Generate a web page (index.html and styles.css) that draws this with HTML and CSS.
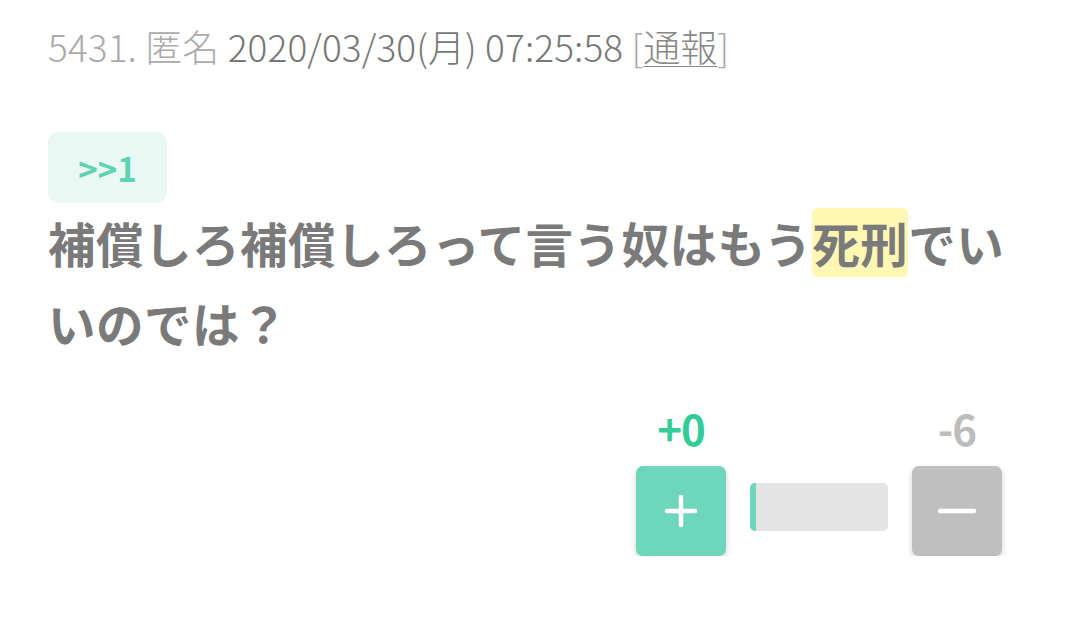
FILE: index.html
```html
<!DOCTYPE html>
<html lang="ja">
<head>
<meta charset="utf-8">
<link rel="stylesheet" href="styles.css">
</head>
<body>
<div class="post">
  <div class="meta">
    <span class="num">5431.</span>
    <span class="name">匿名</span>
    <span class="date">2020/03/30(月) 07:25:58</span>
    <span class="report">[<a class="report-link">通報</a>]</span>
  </div>
  <div class="anchor">&gt;&gt;1</div>
  <p class="body">補償しろ補償しろって言う奴はもう<span class="hl">死刑</span>でいいのでは？</p>
  <div class="votes">
    <div class="vote-col">
      <div class="count plus">+0</div>
      <button class="btn btn-plus" aria-label="plus">
        <svg width="40" height="40" viewBox="0 0 40 40"><path d="M20 6v28M6 20h28" stroke="#fff" stroke-width="4.5" stroke-linecap="round"/></svg>
      </button>
    </div>
    <div class="bar"><div class="bar-fill" style="width:6px"></div></div>
    <div class="vote-col">
      <div class="count minus">-6</div>
      <button class="btn btn-minus" aria-label="minus">
        <svg width="40" height="40" viewBox="0 0 40 40"><path d="M3 20h34" stroke="#fff" stroke-width="4.5" stroke-linecap="round"/></svg>
      </button>
    </div>
  </div>
</div>
</body>
</html>
```
FILE: styles.css
```css
html, body {
  margin: 0;
  padding: 0;
  background: #fff;
}
body {
  font-family: "Noto Sans CJK JP", "Noto Sans", sans-serif;
}
.post {
  padding: 22px 78px 0 48px;
}
.meta {
  font-size: 37px;
  line-height: 48px;
  font-weight: 300;
  color: #aaa;
  white-space: nowrap;
  letter-spacing: 0.1px;
}
.meta .date {
  color: #777;
}
.meta .report {
  color: #aaa;
}
.report-link {
  color: #888;
  text-decoration: underline;
  text-decoration-thickness: 1px;
  text-underline-offset: 4px;
}
.anchor {
  margin-top: 62px;
  width: 119px;
  height: 71px;
  box-sizing: border-box;
  background: #eaf8f4;
  border-radius: 11px;
  color: #5ed3b2;
  font-weight: 700;
  font-size: 33px;
  display: flex;
  align-items: center;
  justify-content: center;
}
.body {
  margin: 0 -40px 0 0;
  font-size: 47.5px;
  line-height: 80px;
  font-weight: 700;
  color: #7a7a7a;
  letter-spacing: 0.5px;
}
.hl {
  background: #fff7b3;
  border-radius: 5px;
  padding: 0;
}
.votes {
  margin-top: 41px;
  display: flex;
  justify-content: flex-end;
  align-items: flex-end;
  gap: 24px;
}
.vote-col {
  display: flex;
  flex-direction: column;
  align-items: center;
}
.count {
  font-size: 42px;
  font-weight: 700;
  line-height: 48px;
  margin-bottom: 14px;
  letter-spacing: -1px;
}
.count.plus { color: #33cc99; }
.count.minus { color: #bdbdbd; }
.btn {
  width: 90px;
  height: 90px;
  border: none;
  border-radius: 7px;
  display: flex;
  align-items: center;
  justify-content: center;
  padding: 0;
  box-shadow: 0 3px 6px rgba(0,0,0,0.18);
}
.btn-plus { background: #6ed6ba; }
.btn-minus { background: #bfbfbf; }
.bar {
  width: 138px;
  height: 48px;
  background: #e3e3e3;
  border-radius: 5px;
  margin-bottom: 25px;
  overflow: hidden;
  display: flex;
}
.bar-fill {
  height: 100%;
  background: #6ed6ba;
}
```
